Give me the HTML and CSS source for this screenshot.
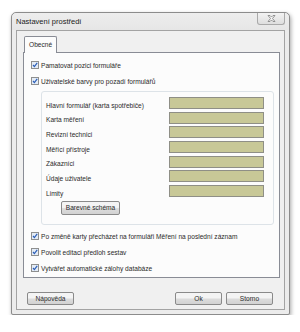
FILE: index.html
```html
<!DOCTYPE html>
<html lang="cs">

<head>
    <meta charset="UTF-8">
    <title>Nastavení prostředí</title>
    <link rel="stylesheet" href="styles.css">
</head>

<body>
    <div class="window">
        <div class="titlebar">
            <span class="title">Nastavení prostředí</span>
            <span class="closeBtn">
                <svg width="9" height="7" viewBox="0 0 9 7">
                    <path d="M1 0.5h2l1.5 1.5 1.5-1.5h2l-2.5 3 2.5 3h-2l-1.5-1.5-1.5 1.5h-2l2.5-3z" fill="#f4f4f4" stroke="#7d7d7d" stroke-width="0.8"/>
                </svg>
            </span>
        </div>
        <div class="client">
            <div class="tabs">
                <span class="tab active">Obecné</span>
            </div>
            <div class="panel">
                <label class="check"><svg class="box" viewBox="0 0 8 8"><rect x="0.5" y="0.5" width="7" height="7" fill="#e4ecf6" stroke="#8e8f8f"/><path d="M2 4l1.4 1.6 2.8-3.8" fill="none" stroke="#2d5fb8" stroke-width="1.2"/></svg>Pamatovat pozici formuláře</label>
                <label class="check"><svg class="box" viewBox="0 0 8 8"><rect x="0.5" y="0.5" width="7" height="7" fill="#e4ecf6" stroke="#8e8f8f"/><path d="M2 4l1.4 1.6 2.8-3.8" fill="none" stroke="#2d5fb8" stroke-width="1.2"/></svg>Uživatelské barvy pro pozadí formulářů</label>
                <div class="group">
                    <div class="colorRow"><span>Hlavní formulář (karta spotřebiče)</span><em></em></div>
                    <div class="colorRow"><span>Karta měření</span><em></em></div>
                    <div class="colorRow"><span>Revizní technici</span><em></em></div>
                    <div class="colorRow"><span>Měřící přístroje</span><em></em></div>
                    <div class="colorRow"><span>Zákazníci</span><em></em></div>
                    <div class="colorRow"><span>Údaje uživatele</span><em></em></div>
                    <div class="colorRow"><span>Limity</span><em></em></div>
                    <a href="javascript:;" class="btn schemaBtn">Barevné schéma</a>
                </div>
                <div class="bottomChecks">
                    <label class="check"><svg class="box" viewBox="0 0 8 8"><rect x="0.5" y="0.5" width="7" height="7" fill="#e4ecf6" stroke="#8e8f8f"/><path d="M2 4l1.4 1.6 2.8-3.8" fill="none" stroke="#2d5fb8" stroke-width="1.2"/></svg>Po změně karty přecházet na formuláři Měření na poslední záznam</label>
                    <label class="check"><svg class="box" viewBox="0 0 8 8"><rect x="0.5" y="0.5" width="7" height="7" fill="#e4ecf6" stroke="#8e8f8f"/><path d="M2 4l1.4 1.6 2.8-3.8" fill="none" stroke="#2d5fb8" stroke-width="1.2"/></svg>Povolit editaci předloh sestav</label>
                    <label class="check"><svg class="box" viewBox="0 0 8 8"><rect x="0.5" y="0.5" width="7" height="7" fill="#e4ecf6" stroke="#8e8f8f"/><path d="M2 4l1.4 1.6 2.8-3.8" fill="none" stroke="#2d5fb8" stroke-width="1.2"/></svg>Vytvářet automatické zálohy databáze</label>
                </div>
            </div>
            <div class="footer">
                <a href="javascript:;" class="btn">Nápověda</a>
                <span class="spacer"></span>
                <a href="javascript:;" class="btn">Ok</a>
                <a href="javascript:;" class="btn">Storno</a>
            </div>
        </div>
    </div>
</body>

</html>
```

FILE: styles.css
```css
* {
    margin: 0;
    padding: 0;
    box-sizing: border-box;
}

body {
    background: #fff;
    font-family: 'Liberation Sans', Arial, sans-serif;
    font-size: 6.6px;
    color: #2a2a2a;
}

a {
    text-decoration: none;
    color: #2a2a2a;
}

.window {
    width: 279px;
    height: 303px;
    margin: 12px 0 0 11px;
    border: 1px solid #8c8c8c;
    border-radius: 5px 5px 2px 2px;
    background: #ececec;
    box-shadow: 1px 2px 4px rgba(0, 0, 0, .35);
    display: flex;
    flex-direction: column;
}

.titlebar {
    height: 17px;
    display: flex;
    align-items: flex-start;
    padding-left: 4px;
    background: linear-gradient(#ededed, #e6e6e6);
    border-radius: 5px 5px 0 0;
}

.title {
    font-size: 7.5px;
    color: #1a1a1a;
    line-height: 18px;
}

.closeBtn {
    margin-left: auto;
    margin-right: 4px;
    width: 28px;
    height: 12px;
    border: 1px solid #a9a9a9;
    border-top: none;
    border-radius: 0 0 3px 3px;
    background: linear-gradient(#f2f2f2, #dedede);
    display: flex;
    align-items: center;
    justify-content: center;
}

.client {
    flex: 1;
    margin: 0 4px 4px;
    border: 1px solid #a3a3a3;
    background: #f0f0f0;
    padding: 5px 4px 0 6px;
    display: flex;
    flex-direction: column;
}

.tabs {
    display: flex;
    height: 16px;
    padding-left: 1px;
    position: relative;
    z-index: 1;
}

.tab {
    width: 33px;
    height: 17px;
    border: 1px solid #898c95;
    border-bottom: none;
    border-radius: 2px 2px 0 0;
    background: #fcfcfc;
    padding-left: 4px;
    line-height: 15px;
}

.panel {
    height: 226px;
    border: 1px solid #898c95;
    background: #fcfcfc;
    padding: 4px 0 0 7px;
}

.check {
    display: flex;
    align-items: center;
    height: 16px;
}

.box {
    width: 8px;
    height: 8px;
    margin-right: 2px;
    flex: none;
}

.group {
    width: 233px;
    height: 134px;
    margin: 2px 0 0 10px;
    border: 1px solid #dde3e8;
    border-radius: 3px;
    padding: 5px 9px 0 4px;
    display: flex;
    flex-direction: column;
    gap: 2.7px;
}

.colorRow {
    display: flex;
    align-items: center;
    height: 12px;
}

.colorRow span {
    flex: 1;
    padding-top: 4px;
}

.colorRow em {
    width: 95px;
    height: 12px;
    border: 1px solid #8f8f86;
    background: #c8c897;
}

.btn {
    display: flex;
    align-items: center;
    justify-content: center;
    width: 47px;
    height: 13px;
    border: 1px solid #8a8a8a;
    border-radius: 2px;
    background: linear-gradient(#f4f4f4 45%, #dcdcdc 55%, #d2d2d2);
}

.schemaBtn {
    width: 59px;
    height: 14px;
    margin: 1px 0 0 15px;
}

.bottomChecks {
    margin-top: 3px;
}

.footer {
    display: flex;
    gap: 4px;
    padding: 14px 7px 0 4px;
}

.spacer {
    flex: 1;
}
```
